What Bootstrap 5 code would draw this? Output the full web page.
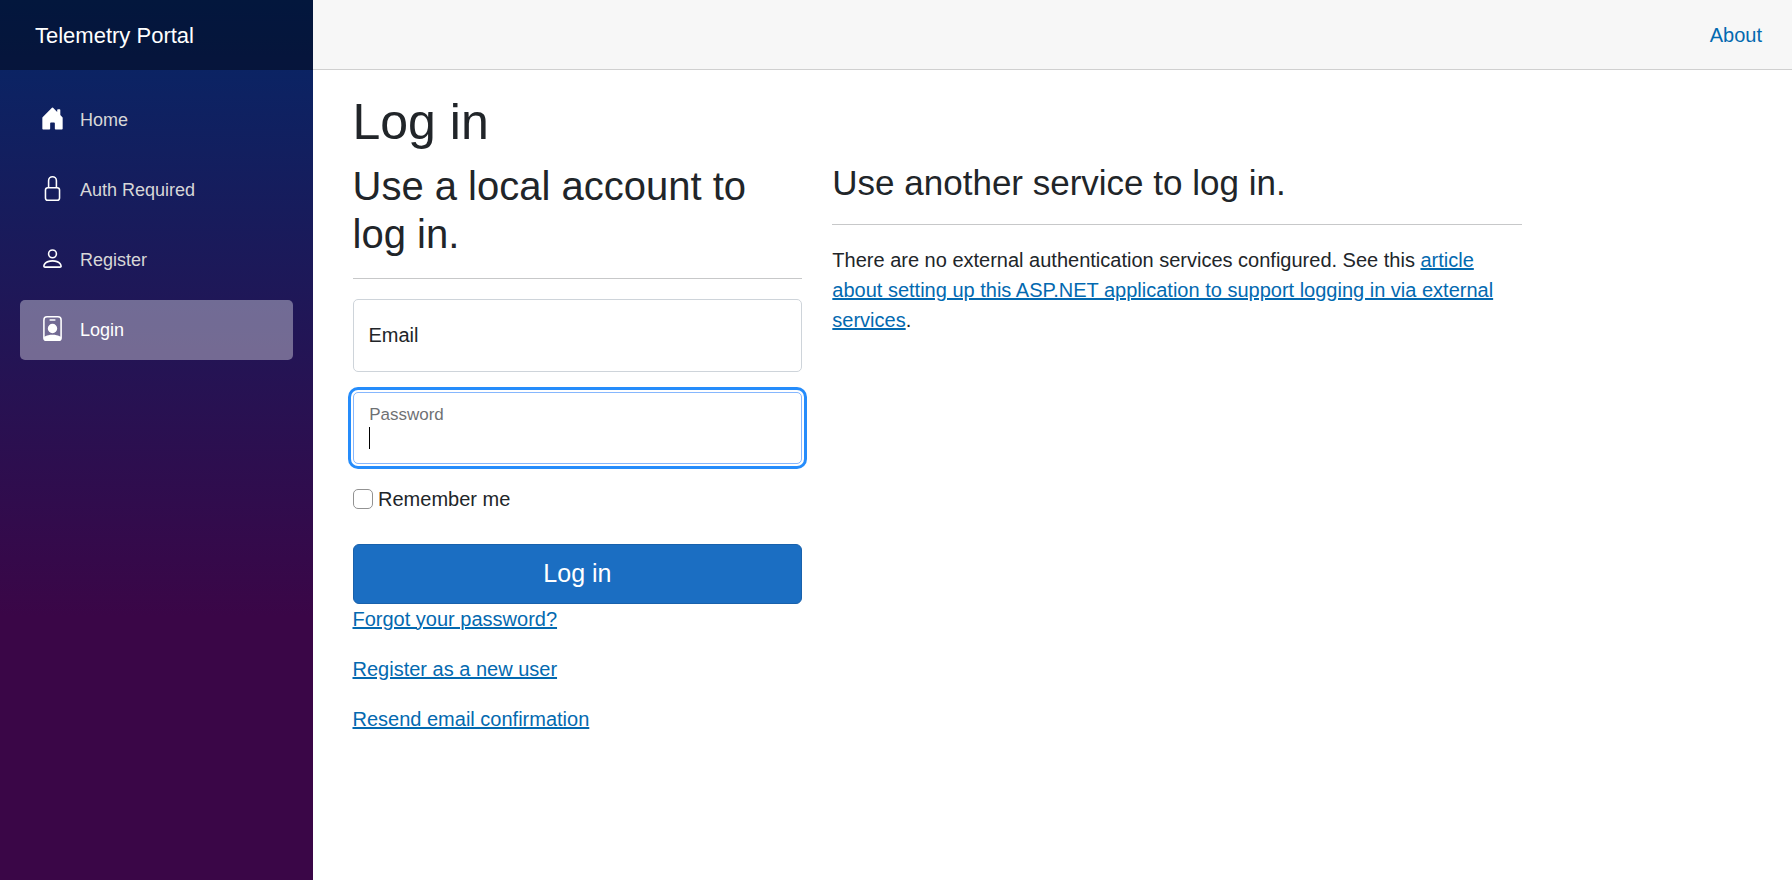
<!DOCTYPE html>
<html lang="en">
<head>
<meta charset="utf-8">
<meta name="viewport" content="width=device-width, initial-scale=1">
<title>Log in</title>
<link href="https://cdn.jsdelivr.net/npm/bootstrap@5.3.0/dist/css/bootstrap.min.css" rel="stylesheet">
<style>
html { font-size: 20px; }
body { font-family: "Liberation Sans", Arial, sans-serif; }
a { color: #0369b0; }
.sidebar { width: 312.5px; background-image: linear-gradient(180deg, rgb(5, 39, 103) 0%, #3a0647 70%); }
.top-row { height: 3.5rem; }
.sidebar .top-row { background-color: rgba(0, 0, 0, .4); }
main .top-row { background-color: #f7f7f7; border-bottom: 1px solid #d0d0d0; padding-right: 1.5rem; }
.sidebar .navbar-brand { font-size: 1.1rem; color: #fff; }
.sidebar .nav-item { font-size: .9rem; padding-bottom: .5rem; }
.sidebar .nav-item:first-child { padding-top: 1rem; }
.sidebar .nav-link { height: 3rem; line-height: 3rem; color: #d7d7d7; border-radius: 5px; padding: 0 1rem; }
.sidebar .nav-link.active { background-color: rgba(255, 255, 255, .37); color: #fff; }
.nav-icon { width: 1.25rem; height: 1.25rem; margin-right: .75rem; margin-top: -4px; fill: #fff; }
article { padding: 1.1rem 1.5rem 0 2rem; }
.form-floating > .form-control { height: calc(3.5rem + 2.5px); border-color: #ced4da; border-radius: 5px; }
.form-floating > .form-control.focused { border-color: #86b7fe; box-shadow: 0 0 0 .1rem #fff, 0 0 0 .25rem #258cfb; }
.form-floating > .focused ~ label { opacity: .65; transform: scale(.85) translateY(-.5rem) translateX(.15rem); }
.caret { position: absolute; z-index: 3; left: 16.5px; top: 35px; width: 1px; height: 22px; background: #000; }
.check-border { border-color: #929292; }
.btn-primary { background-color: #1b6ec2; border-color: #1861ac; border-radius: 6px; }
</style>
</head>
<body>
<div class="d-flex min-vh-100">
  <div class="sidebar flex-shrink-0">
    <div class="top-row navbar navbar-dark ps-3">
      <div class="container-fluid"><a class="navbar-brand" href="#">Telemetry Portal</a></div>
    </div>
    <nav class="nav flex-column">
      <div class="nav-item px-3">
        <a class="nav-link d-flex align-items-center" href="#">
          <svg class="nav-icon" viewBox="0 0 16 16" aria-hidden="true"><path d="M6.5 14.5v-3.505c0-.245.25-.495.5-.495h2c.25 0 .5.25.5.5v3.5a.5.5 0 0 0 .5.5h4a.5.5 0 0 0 .5-.5v-7a.5.5 0 0 0-.146-.354L13 5.793V2.5a.5.5 0 0 0-.5-.5h-1a.5.5 0 0 0-.5.5v1.293L8.354 1.146a.5.5 0 0 0-.708 0l-6 6A.5.5 0 0 0 1.5 7.5v7a.5.5 0 0 0 .5.5h4a.5.5 0 0 0 .5-.5Z"/></svg>Home</a>
      </div>
      <div class="nav-item px-3">
        <a class="nav-link d-flex align-items-center" href="#">
          <svg class="nav-icon" viewBox="0 0 16 16" aria-hidden="true"><path d="M8 1a2 2 0 0 1 2 2v4H6V3a2 2 0 0 1 2-2zm3 6V3a3 3 0 0 0-6 0v4a2 2 0 0 0-2 2v5a2 2 0 0 0 2 2h6a2 2 0 0 0 2-2V9a2 2 0 0 0-2-2zM5 8h6a1 1 0 0 1 1 1v5a1 1 0 0 1-1 1H5a1 1 0 0 1-1-1V9a1 1 0 0 1 1-1z"/></svg>Auth Required</a>
      </div>
      <div class="nav-item px-3">
        <a class="nav-link d-flex align-items-center" href="#">
          <svg class="nav-icon" viewBox="0 0 16 16" aria-hidden="true"><path d="M8 8a3 3 0 1 0 0-6 3 3 0 0 0 0 6Zm2-3a2 2 0 1 1-4 0 2 2 0 0 1 4 0Zm4 8c0 1-1 1-1 1H3s-1 0-1-1 1-4 6-4 6 3 6 4Zm-1-.004c-.001-.246-.154-.986-.832-1.664C11.516 10.68 10.289 10 8 10c-2.29 0-3.516.68-4.168 1.332-.678.678-.83 1.418-.832 1.664h10Z"/></svg>Register</a>
      </div>
      <div class="nav-item px-3">
        <a class="nav-link active d-flex align-items-center" href="#">
          <svg class="nav-icon" viewBox="0 0 16 16" aria-hidden="true"><path d="M6.5 2a.5.5 0 0 0 0 1h3a.5.5 0 0 0 0-1h-3zM11 8a3 3 0 1 1-6 0 3 3 0 0 1 6 0z"/><path d="M4.5 0A2.5 2.5 0 0 0 2 2.5V14a2 2 0 0 0 2 2h8a2 2 0 0 0 2-2V2.5A2.5 2.5 0 0 0 11.5 0h-7zM3 2.5A1.5 1.5 0 0 1 4.5 1h7A1.5 1.5 0 0 1 13 2.5v10.795a4.2 4.2 0 0 0-.776-.492C11.392 12.387 10.063 12 8 12s-3.392.387-4.224.803a4.2 4.2 0 0 0-.776.492V2.5z"/></svg>Login</a>
      </div>
    </nav>
  </div>
  <main class="flex-grow-1">
    <div class="top-row d-flex justify-content-end align-items-center">
      <a class="text-decoration-none" href="#">About</a>
    </div>
    <article>
      <h1>Log in</h1>
      <div class="row">
        <div class="col-md-4">
          <form>
            <h2>Use a local account to log in.</h2>
            <hr>
            <div class="form-floating mb-3">
              <input type="email" class="form-control" id="email" placeholder="name@example.com">
              <label for="email">Email</label>
            </div>
            <div class="form-floating mb-3">
              <input type="password" class="form-control focused" id="password" placeholder="password">
              <label for="password">Password</label>
              <span class="caret"></span>
            </div>
            <div class="mb-3">
              <label class="form-label">
                <input type="checkbox" class="form-check-input check-border">
                Remember me
              </label>
            </div>
            <button type="button" class="w-100 btn btn-lg btn-primary d-block">Log in</button>
            <p><a href="#">Forgot your password?</a></p>
            <p><a href="#">Register as a new user</a></p>
            <p><a href="#">Resend email confirmation</a></p>
          </form>
        </div>
        <div class="col-md-6">
          <h3>Use another service to log in.</h3>
          <hr>
          <p>There are no external authentication services configured. See this <a href="#">article about setting up this ASP.NET application to support logging in via external services</a>.</p>
        </div>
      </div>
    </article>
  </main>
</div>
<script src="https://cdn.jsdelivr.net/npm/bootstrap@5.3.0/dist/js/bootstrap.bundle.min.js"></script>
</body>
</html>
